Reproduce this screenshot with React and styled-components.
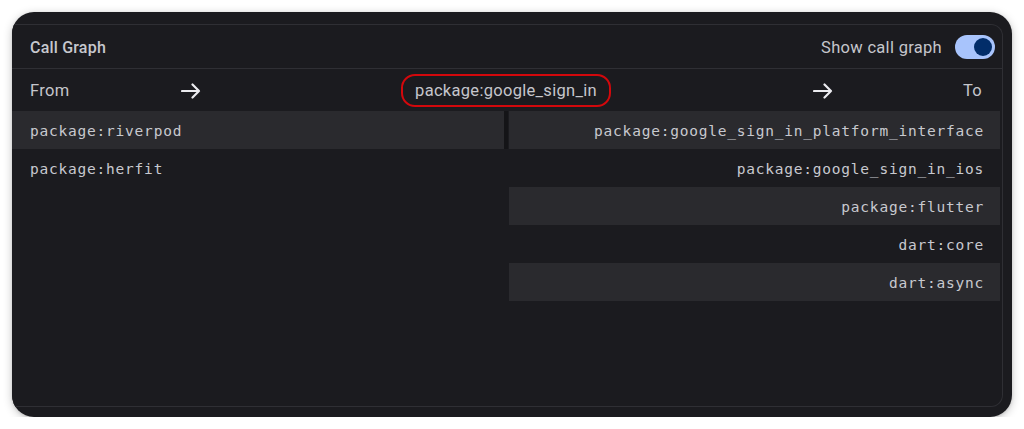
import React from 'react'
import styled, { createGlobalStyle } from 'styled-components'

const GlobalStyle = createGlobalStyle`
    html, body {
        margin: 0;
        padding: 0;
        background: #ffffff;
    }
    body {
        font-family: Roboto, "Noto Sans", sans-serif;
    }
`

const Frame = styled.div`
    width: 1000px;
    height: 405px;
    margin: 12px 0 0 12px;
    box-sizing: border-box;
    padding: 12px 9px 10px 0;
    border-radius: 22px;
    overflow: hidden;
    background-color: #1b1b1f;
    box-shadow: rgba(0, 0, 0, 0.22) 0px 2px 10px, rgba(0, 0, 0, 0.12) 0px 1px 3px;
    display: flex;
`
const Panel = styled.div`
    flex: 1;
    display: flex;
    flex-direction: column;
    border: 1px solid #2f2f34;
    border-left: none;
    border-radius: 0 12px 12px 0;
    background-color: #1b1b1f;
    color: #c5c6cc;
`
const Header = styled.div`
    height: 44px;
    display: flex;
    align-items: center;
    justify-content: space-between;
    padding: 1px 7px 0 18px;
    box-sizing: border-box;
    border-bottom: 1px solid #2f2f34;
`
const Title = styled.span`
    font-size: 16px;
    font-weight: 500;
    letter-spacing: 0.2px;
    color: #c7c8ce;
`
const ToggleLabel = styled.label`
    display: flex;
    align-items: center;
    gap: 13px;
    font-size: 16.5px;
    letter-spacing: 0.3px;
    color: #c5c6cc;
`
const Track = styled.span`
    position: relative;
    width: 40px;
    height: 24px;
    border-radius: 12px;
    background-color: ${(p) => (p.on ? '#a8c4fc' : '#44474e')};
`
const Thumb = styled.span`
    position: absolute;
    top: 3px;
    left: ${(p) => (p.on ? '19px' : '3px')};
    width: 18px;
    height: 18px;
    border-radius: 50%;
    background-color: #022d69;
`
const DirectionRow = styled.div`
    height: 42px;
    display: grid;
    grid-template-columns: 1fr auto 1fr;
    align-items: center;
    padding: 1px 20px 0 18px;
    box-sizing: border-box;
    font-size: 16.5px;
    letter-spacing: 0.3px;
`
const Side = styled.div`
    display: flex;
    align-items: center;
    justify-content: ${(p) => (p.end ? 'flex-end' : 'flex-start')};
    gap: ${(p) => p.gap}px;
`
const Selected = styled.div`
    height: 33px;
    display: flex;
    align-items: center;
    padding: 0 12px;
    border: 2px solid #d3080c;
    border-radius: 14px;
    box-sizing: border-box;
    font-size: 16.5px;
    letter-spacing: 0.3px;
    color: #c5c6cc;
`
const Lists = styled.div`
    display: grid;
    grid-template-columns: 492px 5px 1fr;
    padding-right: 2px;
`
const List = styled.div`
    display: flex;
    flex-direction: column;
`
const Row = styled.div`
    height: 38px;
    display: flex;
    align-items: center;
    justify-content: ${(p) => (p.right ? 'flex-end' : 'flex-start')};
    padding: 1px ${(p) => (p.right ? '16px' : '18px')} 0 18px;
    box-sizing: border-box;
    background-color: ${(p) => (p.shaded ? '#2a2a2e' : 'transparent')};
    font-family: "DejaVu Sans Mono", "Liberation Mono", monospace;
    font-size: 14.5px;
    letter-spacing: 0.78px;
    color: #c8c9cf;
`
const Divider = styled.div`
    height: 38px;
    margin-right: 1px;
    background-color: #141417;
`

const Arrow = () => (
    <svg width="20" height="16" viewBox="0 0 20 16" fill="none">
        <path d="M1 8h17M11.5 1.5 18 8l-6.5 6.5" stroke="#ececf0" strokeWidth="2.2" strokeLinecap="round" strokeLinejoin="round" />
    </svg>
)

const callers = ['package:riverpod', 'package:herfit']
const callees = [
    'package:google_sign_in_platform_interface',
    'package:google_sign_in_ios',
    'package:flutter',
    'dart:core',
    'dart:async',
]

const App = () => {
    return (
        <>
            <GlobalStyle />
            <Frame>
                <Panel>
                    <Header>
                        <Title>Call Graph</Title>
                        <ToggleLabel>
                            Show call graph
                            <Track on={1}>
                                <Thumb on={1} />
                            </Track>
                        </ToggleLabel>
                    </Header>

                    <DirectionRow>
                        <Side gap={112}>
                            <span>From</span>
                            <Arrow />
                        </Side>
                        <Selected>package:google_sign_in</Selected>
                        <Side end={1} gap={130}>
                            <Arrow />
                            <span>To</span>
                        </Side>
                    </DirectionRow>

                    <Lists>
                        <List>
                            {callers.map((c, i) => (
                                <Row key={c} shaded={i % 2 === 0}>{c}</Row>
                            ))}
                        </List>
                        <div>
                            <Divider />
                        </div>
                        <List>
                            {callees.map((c, i) => (
                                <Row key={c} right={1} shaded={i % 2 === 0}>{c}</Row>
                            ))}
                        </List>
                    </Lists>
                </Panel>
            </Frame>
        </>
    )
}

export default App
